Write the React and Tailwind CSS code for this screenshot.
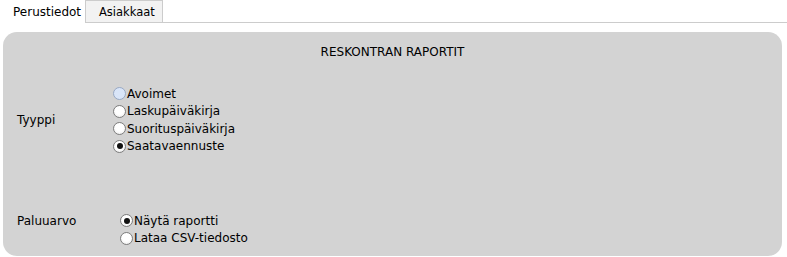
import { useState } from "react";

const tyypit = ["Avoimet", "Laskupäiväkirja", "Suorituspäiväkirja", "Saatavaennuste"];
const paluut = ["Näytä raportti", "Lataa CSV-tiedosto"];

function Radio({ label, checked, hover, onClick }) {
  return (
    <label onClick={onClick} className="flex items-center h-[17.5px] cursor-pointer">
      <span
        className={
          "flex items-center justify-center w-[13px] h-[13px] rounded-full border mr-px " +
          (hover
            ? "border-[#97a8c4] bg-[#d9e5f8]"
            : "border-[#7d7d7d] bg-[radial-gradient(circle_at_50%_40%,#ffffff_45%,#e6e6e6_100%)]")
        }
      >
        {checked && <span className="w-[6px] h-[6px] rounded-full bg-[#111]" />}
      </span>
      <span>{label}</span>
    </label>
  );
}

export default function App() {
  const [tyyppi, setTyyppi] = useState("Saatavaennuste");
  const [paluu, setPaluu] = useState("Näytä raportti");

  return (
    <div className="w-[787px] h-[257px] overflow-hidden bg-white text-[12px] text-black font-['DejaVu_Sans',sans-serif]">
      {/* tabs */}
      <div className="flex h-[23px] border-b border-[#cccccc]">
        <div className="w-[86px] pl-[13px] pt-[3px] bg-white border-r border-[#cccccc] -mb-px">
          Perustiedot
        </div>
        <div className="w-[77px] pl-[13px] pt-[3px] text-[11.5px] bg-[#f2f2f2] border-r border-t border-[#cccccc]">
          Asiakkaat
        </div>
      </div>

      {/* panel */}
      <div className="ml-[3px] mr-[5px] mt-[9px] h-[224px] rounded-[14px] bg-[#d3d3d3]">
        <div className="pt-[11px] text-center">RESKONTRAN RAPORTIT</div>

        <div className="flex items-center mt-[24px]">
          <div className="w-[110px] pl-[14px]">Tyyppi</div>
          <div className="flex flex-col">
            {tyypit.map((t, i) => (
              <Radio
                key={t}
                label={t}
                hover={i === 0}
                checked={tyyppi === t}
                onClick={() => setTyyppi(t)}
              />
            ))}
          </div>
        </div>

        <div className="flex items-start mt-[57px]">
          <div className="w-[117px] pl-[14px] pt-px leading-[17.5px]">Paluuarvo</div>
          <div className="flex flex-col">
            {paluut.map((p) => (
              <Radio key={p} label={p} checked={paluu === p} onClick={() => setPaluu(p)} />
            ))}
          </div>
        </div>
      </div>
    </div>
  );
}
